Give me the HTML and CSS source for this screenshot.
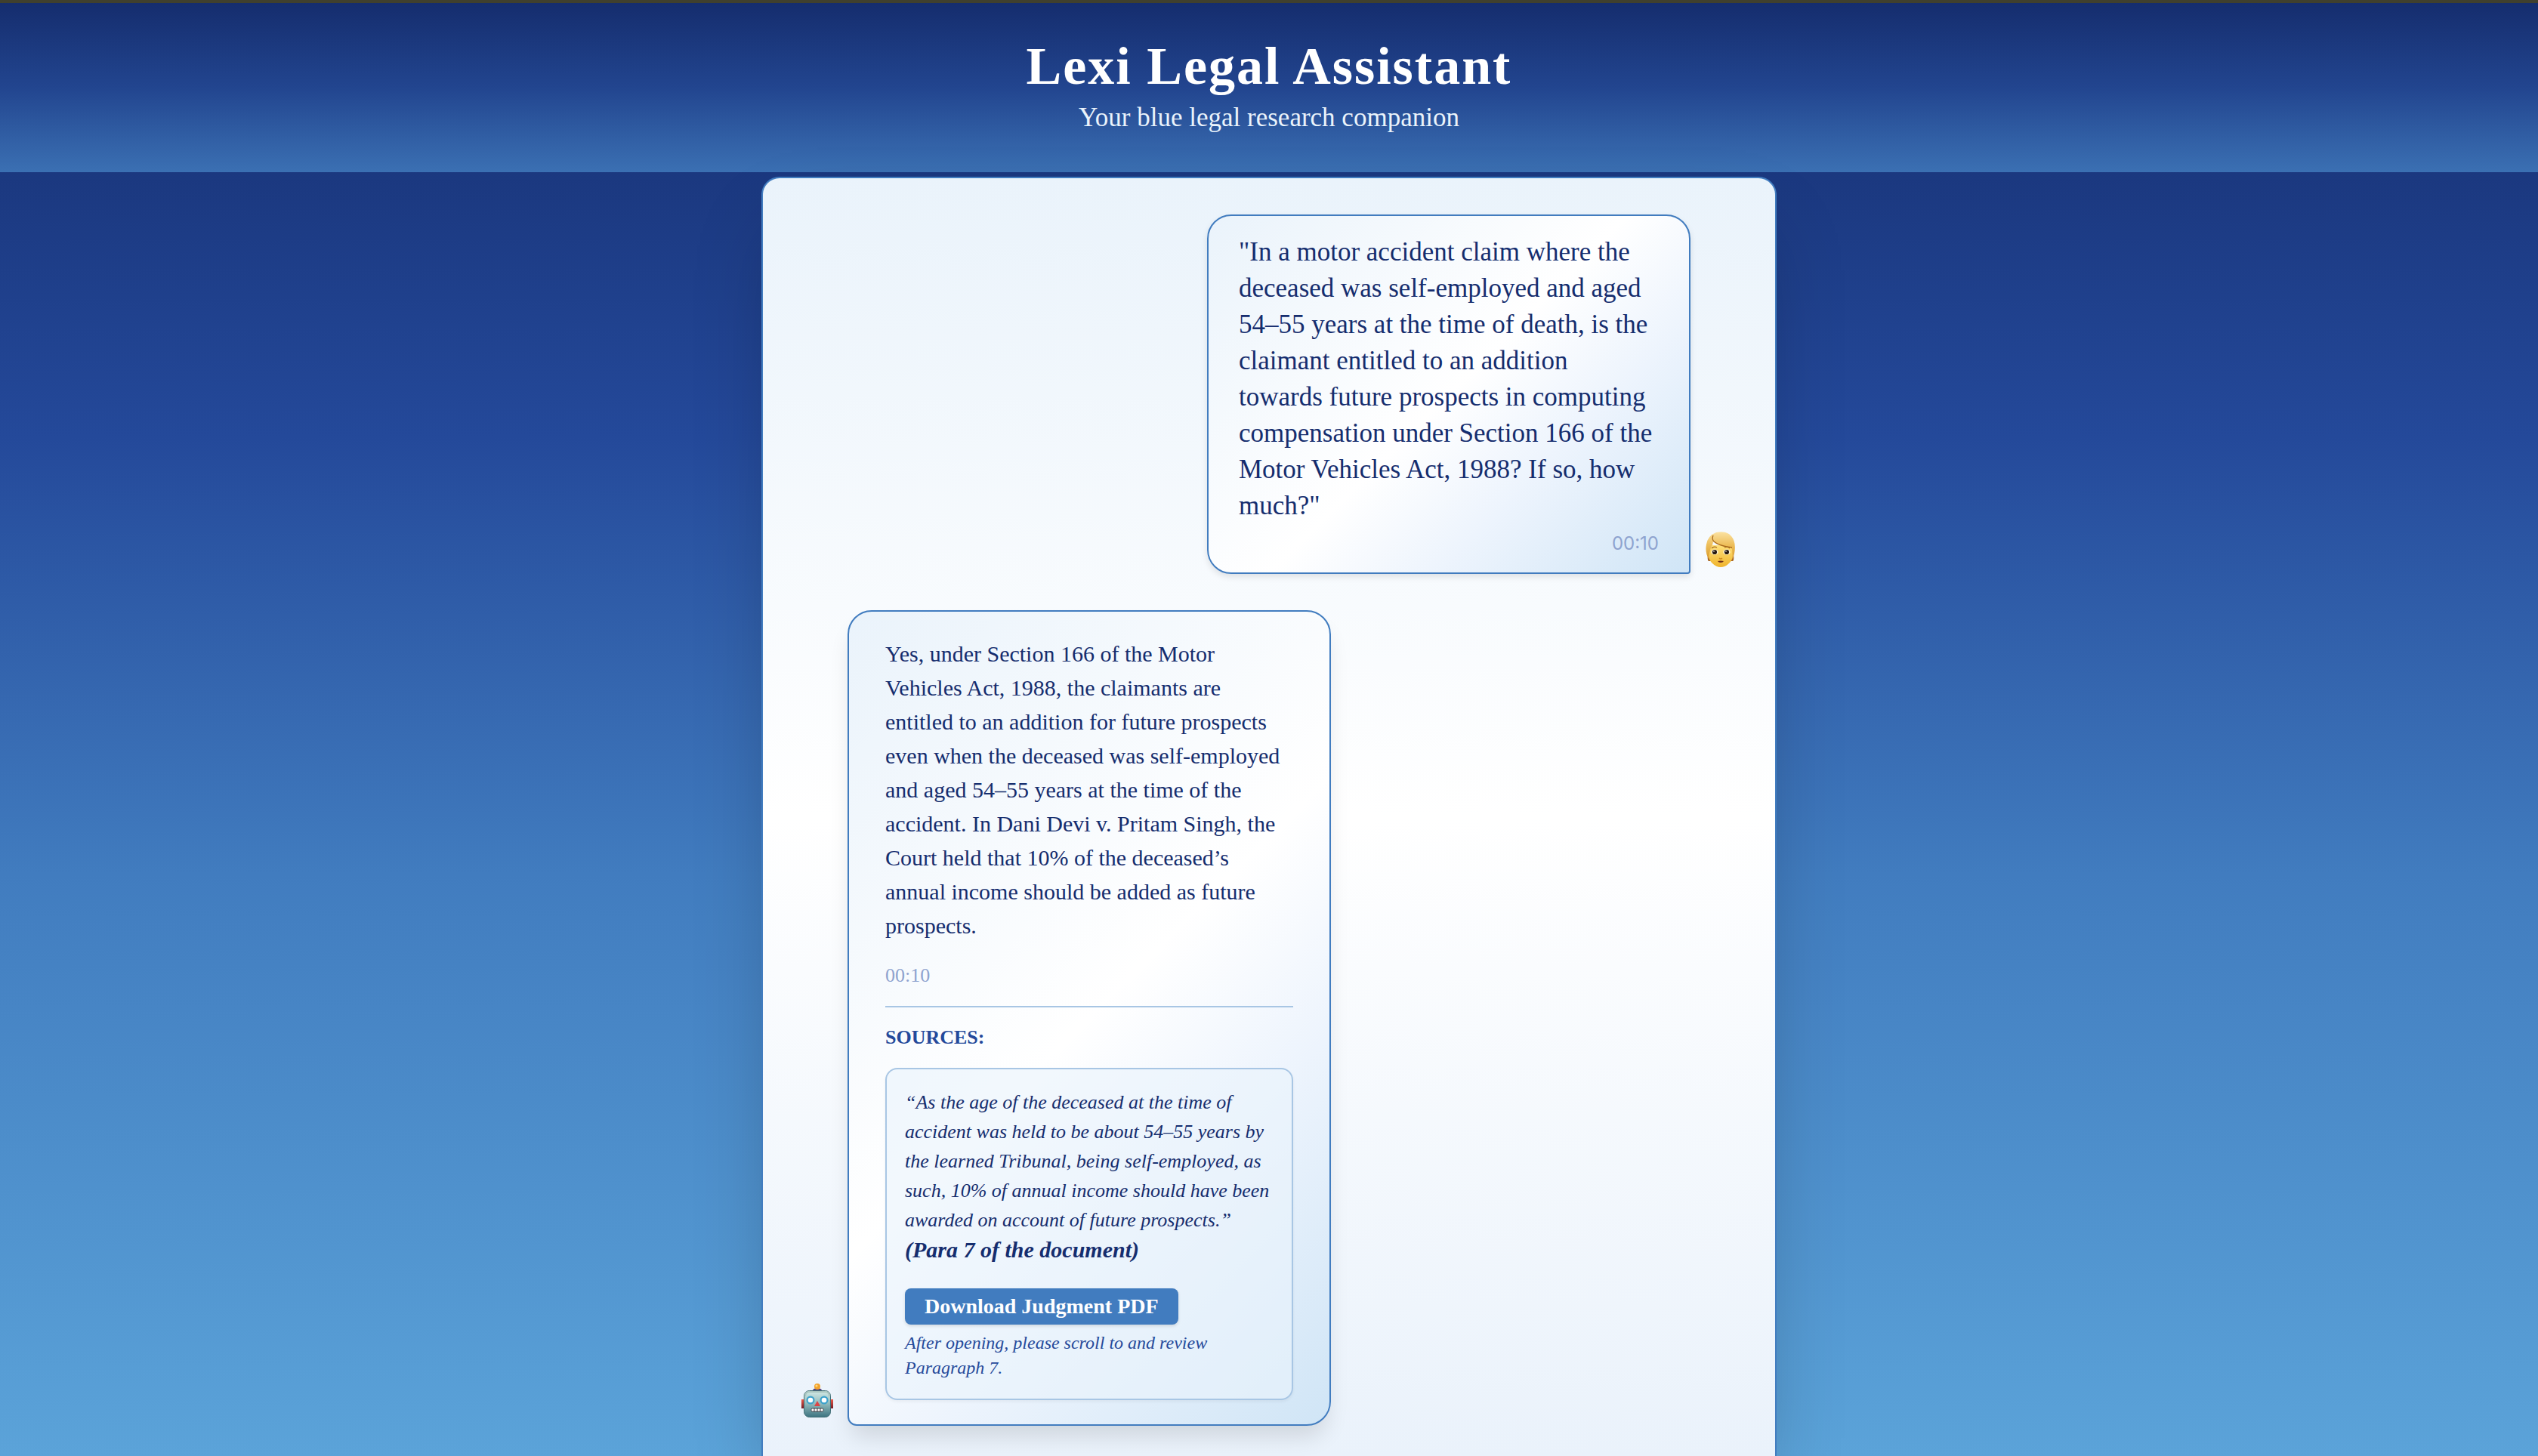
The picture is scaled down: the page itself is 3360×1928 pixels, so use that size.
FILE: index.html
```html
<!DOCTYPE html>
<html lang="en">
<head>
<meta charset="utf-8">
<meta name="viewport" content="width=device-width, initial-scale=1">
<title>Lexi Legal Assistant</title>
<link rel="stylesheet" href="styles.css">
</head>
<body>
<header class="site-header">
  <h1 class="site-title">Lexi Legal Assistant</h1>
  <p class="site-tagline">Your blue legal research companion</p>
</header>
<main class="chat">
  <article class="message message-user">
    <div class="bubble bubble-user">
      <p class="question">"In a motor accident claim where the deceased was self-employed and aged 54–55 years at the time of death, is the claimant entitled to an addition towards future prospects in computing compensation under Section 166 of the Motor Vehicles Act, 1988? If so, how much?"</p>
      <time class="time time-user">00:10</time>
    </div>
    <svg class="avatar" viewBox="0 0 48 48" role="img" aria-label="User">
      <defs>
        <linearGradient id="face" x1="0" y1="0" x2="0" y2="1"><stop offset="0" stop-color="#ffe07a"/><stop offset="1" stop-color="#efb42c"/></linearGradient>
        <linearGradient id="hair" x1="0" y1="0" x2="0" y2="1"><stop offset="0" stop-color="#fbe2a2"/><stop offset=".5" stop-color="#edbd58"/><stop offset="1" stop-color="#d99a2c"/></linearGradient>
      </defs>
      <path d="M7 31h5v8H8q-2-1-1-8zM41 31h-5v8h4q2-1 1-8z" fill="#a86522"/>
      <path d="M8 18h32v14q0 5-5 10-5 5-11 5t-11-5q-5-5-5-10z" fill="url(#face)"/>
      <path d="M8 36Q3 27 5 17 7 5 18 1q13-3 20 5 7 8 4 23l-2 7-1-13-3-3Q22 20 14 13q0 4-3 8-2 6-3 15z" fill="url(#hair)"/>
      <path d="M14 5q-2 5 1 8 7 6 24 8" fill="none" stroke="#a96a1d" stroke-width="1.3"/>
      <path d="M12 22q3-3 7-1M29 21q4-2 7 1" fill="none" stroke="#a56a1d" stroke-width="1.3"/>
      <ellipse cx="16" cy="27" rx="4.600" ry="3.600" fill="#fff7df"/><ellipse cx="32" cy="27" rx="4.600" ry="3.600" fill="#fff7df"/>
      <circle cx="16" cy="27" r="3.100" fill="#291b12"/><circle cx="32" cy="27" r="3.100" fill="#291b12"/>
      <circle cx="15" cy="26" r=".8" fill="#fff"/><circle cx="31" cy="26" r=".8" fill="#fff"/>
      <path d="M22 35q2 2 4 0" fill="none" stroke="#cf8a1e" stroke-width="1.4"/>
      <path d="M20 39q4-1 8 0-1 2-4 2t-4-2z" fill="#70301a"/>
    </svg>
  </article>

  <article class="message message-bot">
    <svg class="avatar" viewBox="0 0 48 48" role="img" aria-label="Lexi">
      <defs>
        <linearGradient id="head" x1="0" y1="0" x2="0" y2="1"><stop offset="0" stop-color="#d5ebe7"/><stop offset=".5" stop-color="#8fb9bb"/><stop offset="1" stop-color="#3c7380"/></linearGradient>
        <linearGradient id="ear" x1="0" y1="0" x2="0" y2="1"><stop offset="0" stop-color="#ef5a4a"/><stop offset="1" stop-color="#701c26"/></linearGradient>
      </defs>
      <path d="M3 21h5v12H3zM40 21h5v12h-5z" fill="url(#ear)"/>
      <ellipse cx="24" cy="9" rx="6" ry="3" fill="#50407f"/>
      <circle cx="24" cy="4" r="4" fill="#f3a22b"/><circle cx="23" cy="3" r="1.600" fill="#ffd982"/>
      <rect x="6.500" y="9.500" width="35" height="35" rx="7" fill="url(#head)" stroke="#426f76"/>
      <path d="M8 17q0-6 6-6h20q6 0 6 6" fill="none" stroke="#a9c5bf" stroke-width="2"/>
      <circle cx="15" cy="22" r="5.500" fill="#3da2cc"/><circle cx="33" cy="22" r="5.500" fill="#3da2cc"/>
      <circle cx="15" cy="22" r="3.300" fill="#fff"/><circle cx="33" cy="22" r="3.300" fill="#fff"/>
      <path d="M24 23l4 7h-8z" fill="#dc4547"/>
      <rect x="16" y="33" width="16" height="4" rx="1.500" fill="#fff" stroke="#423d43"/>
      <path d="M20 33v4M24 33v4M28 33v4" stroke="#423d43"/>
    </svg>
    <div class="bubble bubble-bot">
      <p class="answer">Yes, under Section 166 of the Motor Vehicles Act, 1988, the claimants are entitled to an addition for future prospects even when the deceased was self-employed and aged 54–55 years at the time of the accident. In Dani Devi v. Pritam Singh, the Court held that 10% of the deceased’s annual income should be added as future prospects.</p>
      <time class="time time-bot">00:10</time>
      <section class="sources">
        <h2 class="sources-title">SOURCES:</h2>
        <div class="source">
          <blockquote class="quote">“As the age of the deceased at the time of accident was held to be about 54–55 years by the learned Tribunal, being self-employed, as such, 10% of annual income should have been awarded on account of future prospects.” <strong class="quote-ref">(Para 7 of the document)</strong></blockquote>
          <a class="download" href="#judgment">Download Judgment PDF</a>
          <p class="note">After opening, please scroll to and review Paragraph 7.</p>
        </div>
      </section>
    </div>
  </article>
</main>
</body>
</html>
```
FILE: styles.css
```css
* { box-sizing: border-box; }

body {
  display: flex;
  flex-direction: column;
  gap: 6px;
  min-height: 100vh;
  margin: 0;
  background: linear-gradient(180deg, #152d6e 0%, #24499a 30%, #417cbf 60%, #5ba3d9 100%);
  color: #152d6e;
  font-family: Georgia, "Liberation Serif", serif;
}

h1, h2, p, blockquote { margin: 0; }

.site-header {
  padding: 46px 32px 52px;
  border-top: 4px solid #40402e;
  background: linear-gradient(180deg, #152d6e 0%, #22458f 50%, #3b70b3 100%);
  text-align: center;
}

.site-title {
  color: #fff;
  font-size: 70px;
  line-height: 76px;
  letter-spacing: 2px;
}

.site-tagline {
  margin-top: 10px;
  color: #eaf3fb;
  font-size: 35px;
  line-height: 40px;
}

.chat {
  display: flex;
  flex: 1;
  flex-direction: column;
  gap: 48px;
  width: 100%;
  max-width: 1344px;
  margin: 0 auto;
  padding: 48px 48px 40px;
  border: 2px solid #417cbf;
  border-bottom: 0;
  border-radius: 24px 24px 0 0;
  background: linear-gradient(180deg, #eaf3fb 0%, #fff 50%, #eaf2fb 100%);
  box-shadow: 0 50px 100px -24px rgba(0, 0, 0, 0.25);
}

.message {
  display: flex;
  align-items: flex-end;
  gap: 16px;
}

.message-user { justify-content: flex-end; }

.avatar {
  flex: none;
  width: 48px;
  height: 48px;
  margin-bottom: 8px;
  overflow: visible;
}

.bubble {
  width: 100%;
  max-width: 640px;
  border: 2px solid #417cbf;
  background: linear-gradient(135deg, #eaf3fb 0%, #fff 50%, #edf4fd 70%, #d0e5f6 100%);
}

.bubble-user {
  padding: 24px 40px 22px;
  border-radius: 32px 32px 4px 32px;
  box-shadow: 0 4px 8px rgba(0, 0, 0, 0.1);
}

.bubble-bot {
  padding: 33px 48px 32px;
  border-radius: 32px 32px 32px 12px;
  box-shadow: 0 20px 30px -6px rgba(0, 0, 0, 0.12);
}

.question {
  padding-right: 4px;
  font-size: 35px;
  line-height: 48px;
}

.answer {
  font-size: 30px;
  line-height: 45px;
}

.time {
  display: block;
  color: #8ea3cf;
  line-height: 32px;
}

.time-user {
  margin-top: 10px;
  font-family: Inter, sans-serif;
  font-size: 24px;
  text-align: right;
}

.time-bot {
  margin-top: 28px;
  font-size: 26px;
}

.sources {
  margin-top: 24px;
  padding-top: 22px;
  border-top: 2px solid #a8c6e4;
}

.sources-title {
  color: #24499a;
  font-size: 26px;
  line-height: 36px;
}

.source {
  margin-top: 22px;
  padding: 24px;
  border: 2px solid #a8c6e4;
  border-radius: 16px;
  background: rgba(234, 243, 251, 0.6);
  box-shadow: 0 2px 4px rgba(0, 0, 0, 0.05);
}

.quote {
  font-size: 26px;
  font-style: italic;
  line-height: 39px;
}

.quote-ref {
  display: block;
  font-size: 30px;
}

.download {
  display: block;
  width: fit-content;
  margin-top: 32px;
  padding: 0 26px;
  border-radius: 8px;
  background: #417cbf;
  box-shadow: 0 2px 4px rgba(0, 0, 0, 0.12);
  color: #fff;
  font-size: 28px;
  font-weight: bold;
  line-height: 48px;
  text-decoration: none;
}

.note {
  margin-top: 8px;
  color: #24499a;
  font-size: 24px;
  font-style: italic;
  line-height: 33px;
}
```
